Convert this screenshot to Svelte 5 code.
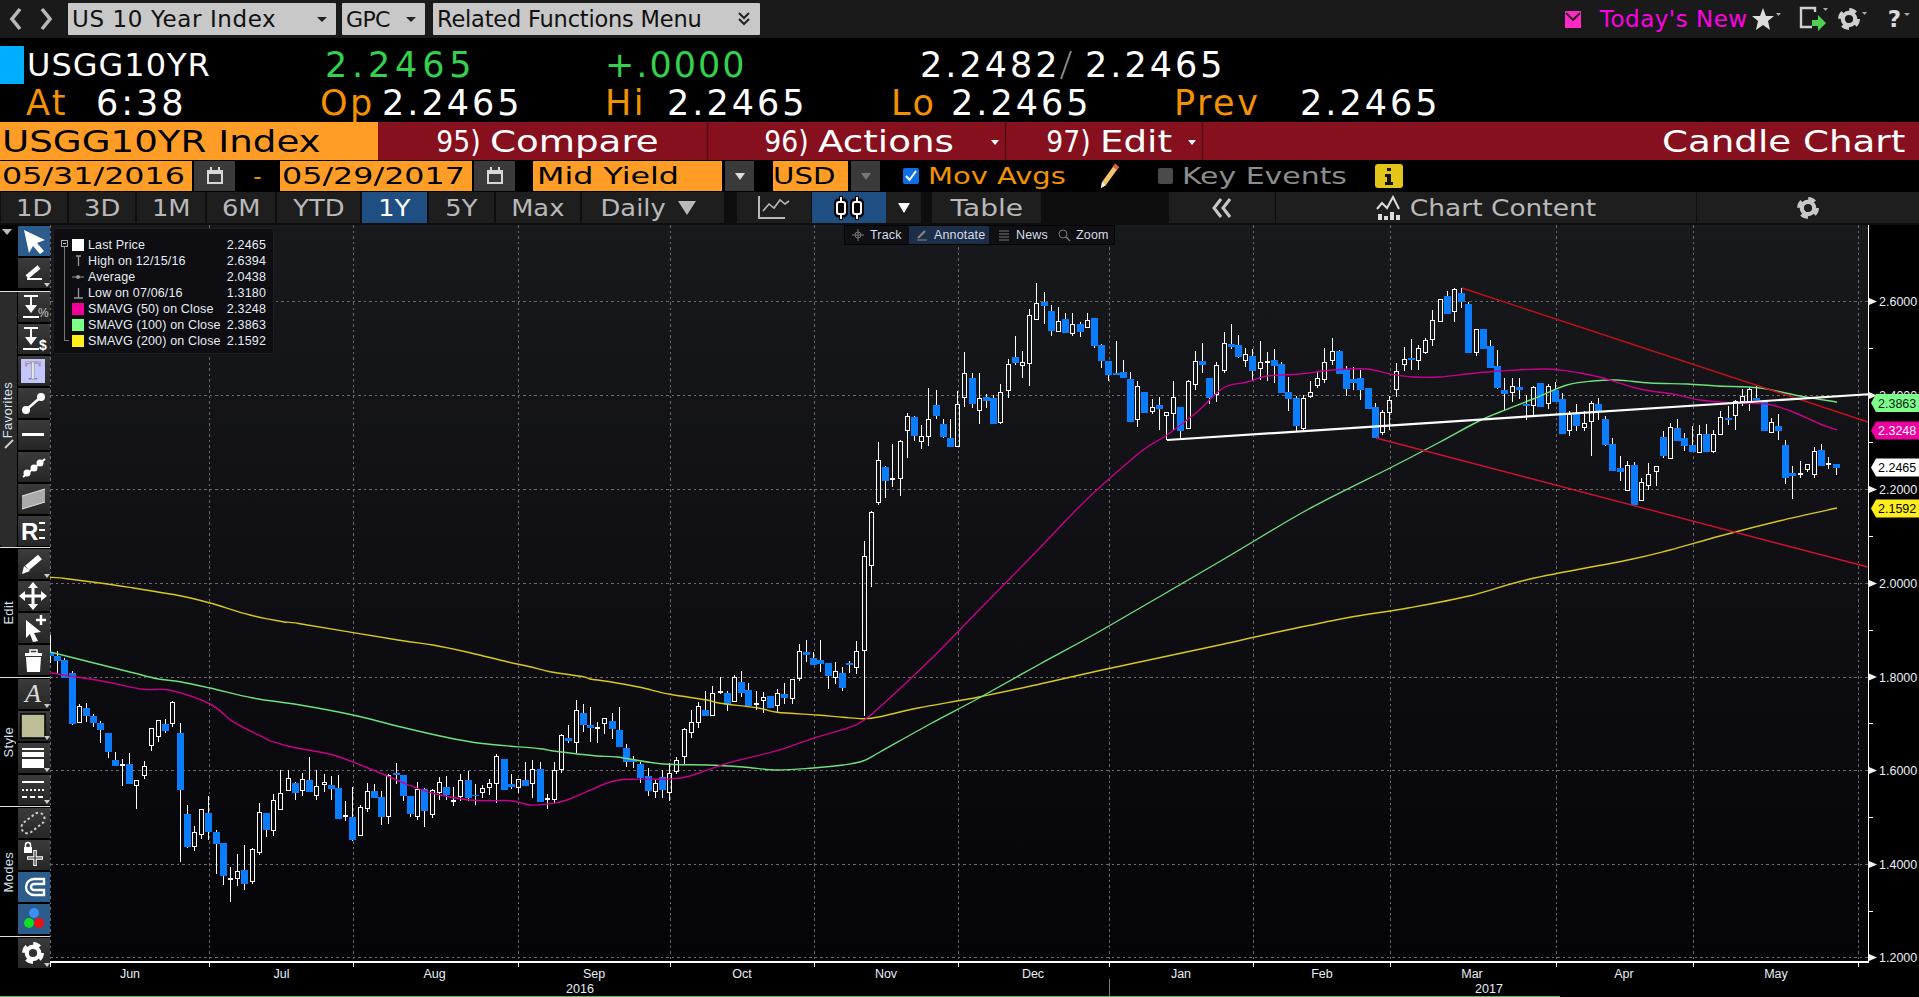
<script>
  const seg = (off, rows) => rows.map(([k, a, b, h, l]) => [k, off + a / 3, off + b / 3, off + h / 3, off + l / 3]);
  const W = 0, B = 1, D = 2;
  const data = [
    ...seg(640, [[B,38,47,-15,68],[B,48,63,33,103],[B,60,114,55,115],[B,99,251,92,254],[W,199,248,192,248],[B,204,228,188,245],[B,228,249,222,262],[B,249,270,242,308],[B,279,336,278,354],[B,360,378,336,378],[D,372,376,358,437],[B,372,432,339,432],[W,421,437,421,506],[W,379,407,363,417],[W,265,317,265,332],[W,240,290,240,305],[B,252,273,237,278],[W,186,251,183,261],[B,279,450,249,665],[B,522,621,495,625],[W,577,620,558,632],[W,508,584,508,597],[B,519,576,468,600],[B,576,612,570,702],[B,609,708,609,735],[D,715,719,681,785],[W,693,716,642,738],[B,690,732,615,750],[W,627,725,625,731],[W,517,638,489,645],[B,519,570,519,590],[W,481,572,461,587],[W,460,509,391,509],[W,415,452,390,452],[B,430,459,427,480],[W,418,452,400,468],[B,420,456,351,456],[W,439,467,390,480],[W,427,434,402,456],[B,435,447,408,480],[B,444,537,405,537],[D,525,529,483,543],[B,531,600,441,603],[W,502,587,495,587],[W,454,505,429,516],[B,453,474,432,474],[B,471,531,453,555],[W,405,530,402,552],[B,399,405,369,432],[B,405,468,405,483],[B,468,522,468,531],[W,448,530,426,540],[B,447,513,444,561],[W,451,522,447,534],[W,427,458,411,480],[B,441,465,408,480],[D,479,483,441,498],[W,421,468,402,483],[B,420,474,393,483],[B,465,468,432,495],[W,445,458,435,474],[W,430,443,417,465],[W,349,431,342,489],[B,357,450,357,450],[B,432,441,402,447],[W,418,441,417,458],[B,420,438,366,438],[W,388,431,360,474]]),
    ...seg(480, [[B,867,965,846,965],[D,953,957,942,987],[W,871,958,847,970],[W,766,868,763,880],[B,773,783,735,790],[W,691,788,660,818],[B,699,735,672,755],[B,735,744,681,785],[D,742,746,726,788],[W,715,731,715,762],[B,723,747,700,777],[B,750,801,681,801],[B,804,846,792,861],[B,840,846,828,864],[B,852,894,846,909],[B,888,933,864,948],[W,910,935,900,954],[B,891,930,870,954],[W,880,937,850,963],[W,841,874,831,882],[W,748,830,745,855],[W,727,758,690,774],[W,679,728,666,744],[B,690,708,633,708],[W,640,706,618,708],[D,634,638,591,642],[B,640,675,633,693],[W,592,665,586,665],[B,606,639,573,651],[B,630,678,609,678],[D,670,674,633,690],[W,652,661,636,699],[B,648,684,648,684],[W,640,676,627,696],[B,642,654,609,672],[W,598,656,598,672],[W,514,596,492,603],[B,516,525,480,546],[B,534,555,516,555],[B,540,552,480,576],[B,549,588,549,627],[W,574,592,546,612],[B,579,624,561,633],[B,549,555,543,579],[W,514,562,483,582],[W,229,512,183,708],[W,97,257,93,321]]),
    ...seg(270, [[W,571,698,516,705],[B,591,633,588,684],[D,625,629,522,651],[W,514,626,510,678],[W,439,482,430,564],[B,441,498,438,513],[W,499,515,465,537],[W,448,500,354,528],[B,405,438,360,447],[B,462,501,447,504],[B,504,531,447,531],[W,403,530,363,530],[W,310,383,246,411],[B,324,402,309,414],[W,385,422,309,462],[B,381,393,372,414],[B,384,462,375,462],[W,367,456,342,462],[W,283,362,267,384],[B,261,279,198,285],[W,277,287,243,324],[W,136,281,117,348],[W,100,149,39,149],[B,95,108,66,162],[B,123,183,105,198],[W,154,185,111,185],[B,147,189,129,189],[W,163,189,129,198],[B,162,186,156,201],[W,151,173,129,173],[B,144,228,144,234],[B,225,273,222,294],[B,273,315,273,333],[B,309,315,213,315],[B,306,324,270,324],[B,327,456,306,456],[W,349,449,333,471],[B,366,429,366,429],[W,412,425,387,432],[B,405,417,381,480],[W,427,437,427,510],[W,382,431,333,480],[B,411,483,411,507],[W,334,476,330,476],[W,274,344,243,360]]),
    ...seg(270, [[B,273,285,219,309],[B,324,384,324,402],[W,286,374,276,396],[W,220,302,186,309],[B,222,231,162,237],[B,225,261,195,264],[W,254,272,234,291],[B,258,303,237,333],[W,277,296,213,330],[D,273,277,246,333],[B,270,288,237,339],[B,282,369,276,369],[B,366,387,321,423],[B,384,468,378,483],[W,385,476,375,480],[W,367,379,333,384],[W,325,347,306,354],[W,277,329,234,339],[W,244,272,204,285],[B,243,312,240,312],[B,300,357,288,378],[B,327,339,291,360],[B,324,360,300,390],[B,354,417,354,417],[B,411,504,399,504],[W,427,487,420,495],[W,391,428,378,480],[W,304,359,279,381],[W,268,283,231,303],[B,264,270,207,300],[W,235,272,225,300],[W,211,248,204,252],[W,151,208,120,228],[W,88,155,88,155],[B,78,132,63,132],[W,58,124,55,156],[B,69,96,54,114],[B,102,249,96,249],[W,178,248,178,258],[B,177,237,177,237],[B,228,294,210,294],[B,288,354,240,357]]),
    ...seg(270, [[B,360,372,324,420],[W,349,367,324,396],[B,351,360,324,387],[B,402,408,375,450],[W,352,407,348,438],[B,339,411,339,411],[W,349,400,342,417],[B,360,396,336,396],[B,387,492,369,492],[W,433,482,423,498],[B,432,468,402,483],[W,460,472,423,483],[W,400,455,393,558],[B,402,423,384,450],[B,447,525,438,528],[B,522,603,504,603],[B,594,606,558,633],[W,586,661,573,661],[B,585,705,576,708],[W,637,690,624,693],[W,613,647,579,660],[W,589,605,588,648],[B,501,558,483,564],[W,472,566,459,566],[B,474,513,447,513],[B,504,528,489,543],[B,525,546,468,546],[W,493,548,465,548],[B,492,546,462,546],[W,493,545,480,549],[W,442,493,423,493],[B,444,450,408,465],[W,394,437,390,480],[W,379,394,357,408],[W,358,394,354,423],[B,384,390,348,390],[B,393,483,393,483],[W,457,487,444,487],[B,468,483,432,510],[B,525,624,510,642],[B,609,618,588,687],[D,608,612,573,624],[W,583,597,582,606],[W,544,613,531,624],[B,540,588,522,588],[D,579,583,561,597],[B,582,594,582,615]])
  ];
  const candles = data.map((c, i) => ({ k: c[0], x: Math.floor(50.4 + 7.2 * i) + 0.5, t: c[1], b: c[2], h: c[3], l: c[4] }));

  // Catmull-Rom through the measured points, so the averages read as curves
  const smooth = (a) => {
    let d = `M${a[0][0]} ${a[0][1]}`;
    for (let i = 0; i < a.length - 1; i++) {
      const p0 = a[Math.max(i - 1, 0)], p1 = a[i], p2 = a[i + 1], p3 = a[Math.min(i + 2, a.length - 1)];
      const c1 = [p1[0] + (p2[0] - p0[0]) / 6, p1[1] + (p2[1] - p0[1]) / 6];
      const c2 = [p2[0] - (p3[0] - p1[0]) / 6, p2[1] - (p3[1] - p1[1]) / 6];
      d += `C${c1[0].toFixed(1)} ${c1[1].toFixed(1)} ${c2[0].toFixed(1)} ${c2[1].toFixed(1)} ${p2[0]} ${p2[1]}`;
    }
    return d;
  };
  const sma200 = smooth([[50,577.3],[67,578.7],[100,583],[133,588],[180,595.7],[210,603],[250,615],[283,621.7],[300,623.7],[398,640],[433,645],[470,652.7],[507,661.7],[530,666.7],[550,671.7],[583,676.7],[590,679],[610,681.7],[640,687.3],[670,694.3],[707,700],[720,703.3],[757,707.7],[777,712.3],[817,715],[843,717.3],[863,718.7],[880,716.7],[918,708],[979,697],[1040,684],[1102,670],[1163,657],[1224,644],[1273,633],[1346,618],[1408,608],[1469,596],[1530,579],[1628,560],[1670,550],[1720,536],[1780,520.7],[1837,508]]);
  const sma100 = smooth([[50,652],[93,662.7],[133,672.7],[157,678.7],[180,681.7],[210,688],[253,698],[300,705],[353,715],[397,726],[440,736],[480,743.3],[540,748.7],[553,751],[597,756],[617,757],[663,764],[707,765],[743,767],[777,770],[813,768],[843,765],[863,761],[880,752],[930,724],[979,698],[1040,664],[1102,630],[1224,559],[1307,510],[1390,468],[1440,442],[1477,422],[1500,412],[1533,399],[1567,385],[1593,381],[1617,380],[1650,383],[1687,384],[1717,386],[1760,388],[1800,396],[1837,402]]);
  const sma50 = smooth([[50,672.7],[70,676],[107,682],[143,689.3],[170,690.3],[210,704],[233,721.7],[260,735.7],[273,741.7],[293,747.3],[333,755],[373,770],[407,784.3],[433,793.3],[473,800.3],[510,800.7],[530,805],[547,804],[567,800],[610,782],[630,779.3],[670,779],[690,776],[727,763.3],[777,750.7],[813,738.3],[857,724.3],[880,706.7],[930,660],[979,610],[1030,558],[1077,509],[1100,487],[1143,450],[1167,435],[1197,412],[1223,388],[1247,382],[1267,376],[1300,374],[1333,370],[1367,369],[1390,374],[1413,377],[1440,377],[1467,374],[1500,371],[1547,369],[1580,373],[1603,378],[1640,389],[1673,394],[1700,400],[1733,403],[1767,404],[1793,412],[1820,424],[1837,430]]);

  const vgrid = [209.5, 353.5, 518.5, 670.5, 814.5, 958.5, 1109.5, 1253.5, 1390.5, 1556.5, 1693.5, 1858.5];
  const hgrid = [['2.6000',301.5],['2.4000',395.5],['2.2000',489.5],['2.0000',583.5],['1.8000',677],['1.6000',770.5],['1.4000',864.5],['1.2000',957.5]];
  const minor = [348, 442, 536, 630, 723.5, 817.5, 911];
  const months = [['Jun',130],['Jul',281.5],['Aug',434.5],['Sep',594],['Oct',742],['Nov',886],['Dec',1033],['Jan',1181],['Feb',1322],['Mar',1472],['Apr',1624],['May',1776]];
  const tags = [
    { v: '2.3863', y: 403, bg: '#7dff8c', fg: '#0c1a10' },
    { v: '2.3248', y: 430.5, bg: '#ec00a0', fg: '#ffffff' },
    { v: '2.2465', y: 467.5, bg: '#ffffff', fg: '#000000' },
    { v: '2.1592', y: 508.5, bg: '#ffee1e', fg: '#000000' }
  ];

  const tabsA = [['1D',66],['3D',66],['1M',68],['6M',68],['YTD',83],['1Y',65,true],['5Y',65],['Max',84]];

  const ic = (inner) => `<svg width="32" height="30" viewBox="0 0 32 30">${inner}</svg>`;
  const gearSvg = (cx, cy, r, c = '#fff') => `<circle cx="${cx}" cy="${cy}" r="${r * 0.62}" fill="none" stroke="${c}" stroke-width="${r * 0.42}"/><circle cx="${cx}" cy="${cy}" r="${r * 0.92}" fill="none" stroke="${c}" stroke-width="${r * 0.34}" stroke-dasharray="${r * 0.72} ${r * 0.725}"/>`;
  const tool = (svg, opts = {}) => ({ svg: ic(svg), ...opts });
  const arrowDown = '<path d="M6 4h14M13 4v11" stroke="#fff" stroke-width="2" fill="none"/><path d="M7 13h12l-6 8z" fill="#fff"/><rect x="5" y="24" width="16" height="2" fill="#fff"/>';
  const secTop = [
    tool('<polygon points="6,4 27,14 19,17 26,25 22,28 15,20 11,27" fill="#fff"/>', { blue: true }),
    tool('<path d="M9 19 L21 9" stroke="#fff" stroke-width="4.5"/><rect x="9" y="20" width="15" height="2" fill="#fff"/>', { caret: true })
  ];
  const secFav = [
    tool(arrowDown + '<text x="20" y="25" class="ti" fill="#ccc">%</text>'),
    tool(arrowDown + '<text x="21" y="26" class="ti b" fill="#fff">$</text>'),
    tool('<rect x="3" y="3" width="24" height="24" fill="#c4c6fb"/><text x="15" y="23" class="tt">T</text>'),
    tool('<path d="M8 22 L24 8" stroke="#fff" stroke-width="2.5"/><circle cx="8" cy="22" r="4" fill="#fff"/><circle cx="23" cy="9" r="4" fill="#fff"/>'),
    tool('<rect x="4" y="13" width="22" height="3" fill="#fff"/>'),
    tool('<path d="M5 25 L27 7" stroke="#fff" stroke-width="2"/><circle cx="9" cy="21" r="3.5" fill="#fff"/><circle cx="16" cy="16" r="3.5" fill="#fff"/><circle cx="22" cy="11" r="3.5" fill="#fff"/>'),
    tool('<polygon points="4,12 27,5 27,18 4,25" fill="#aaa"/><path d="M4 12 L27 5 M4 25 L27 18" stroke="#ddd" stroke-width="1.2"/>'),
    tool('<text x="3" y="24" class="tr">R</text><path d="M21 7h6M21 14h6M21 22h6" stroke="#fff" stroke-width="2"/>')
  ];
  const secEdit = [
    tool('<path d="M9 19 L22 8" stroke="#fff" stroke-width="6"/><polygon points="4,25 6,17 12,22" fill="#fff"/>', { caret: true }),
    tool('<path d="M15 4v21M4 15h22" stroke="#fff" stroke-width="3"/><path d="M15 1l5 6h-10zM15 29l5-6h-10zM1 15l6-5v10zM29 15l-6-5v10z" fill="#fff"/>'),
    tool('<polygon points="8,7 23,19 16,20 20,28 15,29 12,21 8,25" fill="#fff"/><path d="M23 2v10M18 7h10" stroke="#fff" stroke-width="2.5"/>'),
    tool('<rect x="7" y="8" width="17" height="3" fill="#fff"/><rect x="12" y="5" width="7" height="3" fill="none" stroke="#fff" stroke-width="1.5"/><path d="M8 12h15l-1 15h-13z" fill="#fff"/>')
  ];
  const secStyle = [
    tool('<text x="15" y="23" class="ta">A</text>', { caret: true }),
    tool('<rect x="3" y="3" width="24" height="24" fill="#bdbd96" stroke="#000" stroke-width="1.5"/>', { caret: true }),
    tool('<rect x="4" y="5" width="22" height="2" fill="#fff"/><rect x="4" y="9" width="22" height="5" fill="#fff"/><rect x="4" y="16" width="22" height="9" fill="#fff"/>', { caret: true }),
    tool('<path d="M4 7h22" stroke="#fff" stroke-width="2"/><path d="M4 15h22" stroke="#fff" stroke-width="2" stroke-dasharray="2 2"/><path d="M4 22h22" stroke="#fff" stroke-width="2" stroke-dasharray="5 3"/>', { caret: true })
  ];
  const secModes = [
    tool('<g transform="rotate(-38 15 15)"><rect x="2" y="9" width="26" height="12" rx="6" fill="none" stroke="#ccc" stroke-width="2" stroke-dasharray="2.5 2.5"/></g>'),
    tool('<rect x="6" y="7" width="8" height="6" fill="#fff"/><path d="M7.5 7V5a2.5 2.5 0 0 1 5 0v2" stroke="#fff" stroke-width="1.5" fill="none"/><path d="M17 10v16M9 18h16" stroke="#fff" stroke-width="3.5"/><path d="M17 11v14M10 18h14" stroke="#333" stroke-width="1.2"/>'),
    tool('<path d="M26 7 H16 a8 8 0 0 0 0 16 H26 V18 H16 a3 3 0 0 1 0 -6 H26 z" fill="none" stroke="#fff" stroke-width="2.4"/>', { blue: true }),
    tool('<circle cx="16" cy="9" r="5" fill="#3a8ff0"/><circle cx="11" cy="19" r="5" fill="#10e020"/><circle cx="21" cy="19" r="5" fill="#f01010"/>', { blue: true })
  ];
  const secGear = [tool(gearSvg(15, 15, 10), { caret: true })];

  const legend = [
    { m: 'box', s: '#fff', t: 'Last Price', v: '2.2465' },
    { m: 'hi', t: 'High on 12/15/16', v: '2.6394' },
    { m: 'av', t: 'Average', v: '2.0438' },
    { m: 'lo', t: 'Low on 07/06/16', v: '1.3180' },
    { m: 's', s: '#ee0099', t: 'SMAVG (50) on Close', v: '2.3248' },
    { m: 's', s: '#7dff8c', t: 'SMAVG (100) on Close', v: '2.3863' },
    { m: 's', s: '#ffee1e', t: 'SMAVG (200) on Close', v: '2.1592' }
  ];
</script>

{#snippet Tools(list)}
  <div class="tools">
    {#each list as t}
      <div class="tool" class:blue={t.blue}>
        {@html t.svg}
        {#if t.caret}<span class="tc"></span>{/if}
      </div>
    {/each}
  </div>
{/snippet}

{#snippet cal()}
  <svg width="18" height="20" viewBox="0 0 18 20"><rect x="1" y="4" width="16" height="14" fill="#d8d8d8"/><rect x="3" y="8" width="12" height="8" fill="#3a3a3a"/><rect x="4" y="1" width="2" height="5" fill="#d8d8d8"/><rect x="12" y="1" width="2" height="5" fill="#d8d8d8"/></svg>
{/snippet}

<div class="page">
  <header class="top">
    <svg class="nav" width="50" height="24" viewBox="0 0 50 24"><path d="M11 2 L3 12 L11 22M33 2 L41 12 L33 22" fill="none" stroke="#b9b9b9" stroke-width="3.6"/></svg>
    <div class="box b1"><span class="tx">US 10 Year Index</span><i class="car"></i></div>
    <div class="box b2"><span class="tx t2">GPC</span><i class="car"></i></div>
    <div class="box b3"><span class="tx t3">Related Functions Menu</span>
      <svg width="14" height="16" viewBox="0 0 14 16"><path d="M2 2l5 5 5-5M2 8l5 5 5-5" fill="none" stroke="#222" stroke-width="2"/></svg></div>
    <div class="topright">
      <svg class="mail" width="16" height="17" viewBox="0 0 16 17"><rect width="16" height="17" fill="#ff2ac4"/><path d="M1 2l7 7 7-7" fill="none" stroke="#2a0a20" stroke-width="1.8"/></svg>
      <span class="news">Today's New</span>
      <svg class="i1" width="30" height="24" viewBox="0 0 30 24"><polygon points="12,1 15,9 23,9 17,14 19,23 12,18 5,23 7,14 1,9 9,9" fill="#ddd"/><path d="M25 6h5l-2.500 3z" fill="#aaa"/></svg>
      <svg class="i2" width="34" height="28" viewBox="0 0 34 28"><path d="M14 22H3V3h14v4" fill="none" stroke="#cfcfcf" stroke-width="2.4"/><path d="M14 15h6v-5l8 8-8 8v-5h-6z" fill="#4fd04f"/><path d="M25 3h5l-2.500 3z" fill="#aaa"/></svg>
      <svg class="i3" width="34" height="26" viewBox="0 0 34 26">{@html gearSvg(11, 13, 10, '#cfcfcf')}<path d="M24 6h5l-2.500 3z" fill="#aaa"/></svg>
      <span class="q">?</span><i class="qc"></i>
    </div>
  </header>

  <div class="quote r1">
    <i class="flag"></i>
    <span class="q1 tick">USGG10YR</span>
    <span class="q2 last">2.2465</span>
    <span class="q3 chg">+.0000</span>
    <span class="q4 num">2.2482</span>
    <svg class="slash" width="20" height="30" viewBox="0 0 20 30"><path d="M14 1L4 29" stroke="#888" stroke-width="2"/></svg>
    <span class="num">2.2465</span>
  </div>
  <div class="quote r2">
    <span class="c1 or">At</span><span class="c2 num">6:38</span>
    <span class="c3 or">Op</span><span class="c4 num">2.2465</span>
    <span class="c5 or">Hi</span><span class="c6 num">2.2465</span>
    <span class="c7 or">Lo</span><span class="c8 num">2.2465</span>
    <span class="c9 or">Prev</span><span class="num">2.2465</span>
  </div>

  <div class="bar">
    <div class="sec-name"><span class="sx">USGG10YR Index</span></div>
    <div class="act a1"><span class="fn">95)</span><span class="sy">Compare</span></div>
    <div class="act a2"><span class="fn">96)</span><span class="sy">Actions</span><i class="wc"></i></div>
    <div class="act a3"><span class="fn">97)</span><span class="sy">Edit</span><i class="wc"></i></div>
    <div class="title"><span class="sy">Candle Chart</span></div>
  </div>

  <div class="dates">
    <div class="ob d1"><span class="st">05/31/2016</span></div>
    <div class="gb calb">{@render cal()}</div>
    <div class="dash">-</div>
    <div class="ob d1"><span class="st">05/29/2017</span></div>
    <div class="gb calb">{@render cal()}</div>
    <div class="ob d2"><span class="st">Mid Yield</span></div>
    <div class="gb arr"><i></i></div>
    <div class="ob d3"><span class="st usd">USD</span></div>
    <div class="gb arr dim"><i></i></div>
    <svg class="chk" width="16" height="16" viewBox="0 0 16 16"><rect width="16" height="16" rx="2" fill="#0a6fe8"/><path d="M3 8l3.500 4L13 3" stroke="#fff" stroke-width="2" fill="none"/></svg>
    <span class="mov"><span class="st or2">Mov Avgs</span></span>
    <svg class="pen" width="22" height="26" viewBox="0 0 22 26"><path d="M17 1l4 3-13 18-5 3 1-6z" fill="#f2c46a"/><path d="M17 1l4 3-2 3-4-3z" fill="#e85a3a"/><path d="M4 19l4 3-5 3z" fill="#eee"/></svg>
    <i class="ksq"></i>
    <span class="key"><span class="st gr">Key Events</span></span>
    <svg class="info" width="28" height="24" viewBox="0 0 28 24"><rect width="28" height="24" rx="3" fill="#e3c51a"/><rect x="12" y="4" width="4" height="3" fill="#111"/><path d="M10 10h6v8h2v3h-8v-3h2v-5h-2z" fill="#111"/></svg>
  </div>

  <nav class="tabs">
    {#each tabsA as [t, w, on]}
      <div class="tab" class:on style="width:{w}px"><span class="st2">{t}</span></div>
    {/each}
    <div class="tab daily"><span class="st2">Daily</span><i class="tri"></i></div>
    <div class="tab t-line">
      <svg width="34" height="26" viewBox="0 0 34 26"><path d="M2 1v22h26" fill="none" stroke="#b8b8b8" stroke-width="2"/><path d="M6 16l6-7 5 4 6-8 5 4 4-3" fill="none" stroke="#b8b8b8" stroke-width="1.6"/></svg>
    </div>
    <div class="tab on t-can">
      <svg width="44" height="26" viewBox="0 0 44 26"><path d="M14 1v24M30 1v24" stroke="#000" stroke-width="4"/><rect x="9.500" y="6" width="9" height="14" rx="2" fill="none" stroke="#000" stroke-width="5"/><rect x="25.500" y="6" width="9" height="14" rx="2" fill="none" stroke="#000" stroke-width="5"/><path d="M14 2v4M14 20v4M30 2v4M30 20v4" stroke="#fff" stroke-width="2"/><rect x="10" y="7" width="8" height="12" rx="2" fill="none" stroke="#fff" stroke-width="2"/><rect x="26" y="7" width="8" height="12" rx="2" fill="none" stroke="#fff" stroke-width="2"/></svg>
    </div>
    <div class="tab t-car"><i class="tri w"></i></div>
    <div class="tab t-table"><span class="st2">Table</span></div>
    <div class="tab t-back">
      <svg width="26" height="22" viewBox="0 0 26 22"><path d="M12 2L5 11l7 9M21 2l-7 9 7 9" fill="none" stroke="#c8c8c8" stroke-width="3"/></svg>
    </div>
    <div class="tab t-cc">
      <svg width="28" height="26" viewBox="0 0 28 26"><path d="M2 14l5-6 5 5 6-11 6 12" fill="none" stroke="#ddd" stroke-width="2"/><rect x="3" y="19" width="4" height="6" fill="#ddd"/><rect x="9" y="21" width="4" height="4" fill="#ddd"/><rect x="15" y="17" width="4" height="8" fill="#ddd"/><rect x="21" y="20" width="4" height="5" fill="#ddd"/></svg>
      <span class="st2">Chart Content</span>
    </div>
    <div class="tab t-gear"><svg width="24" height="24" viewBox="0 0 24 24">{@html gearSvg(12, 12, 10, '#c8c8c8')}</svg></div>
  </nav>

  <main class="main">
    <aside class="side">
      <section class="sect s0"><div class="lab"><i class="ldown"></i></div>{@render Tools(secTop)}</section>
      <section class="sect s1"><div class="lab fav"><span class="vt">Favorites</span><svg class="fpen" width="10" height="10" viewBox="0 0 10 10"><path d="M1 9L9 1" stroke="#ccc" stroke-width="2"/></svg></div>{@render Tools(secFav)}</section>
      <section class="sect s2"><div class="lab"><span class="vt">Edit</span></div>{@render Tools(secEdit)}</section>
      <section class="sect s2"><div class="lab"><span class="vt">Style</span></div>{@render Tools(secStyle)}</section>
      <section class="sect s2"><div class="lab"><span class="vt">Modes</span></div>{@render Tools(secModes)}</section>
      <section class="sect s3"><div class="lab"></div>{@render Tools(secGear)}</section>
    </aside>

    <div class="chart">
      <svg class="plot" width="1869" height="771" viewBox="50 225 1869 771">
        <defs>
          <linearGradient id="bg" x1="0" y1="0" x2="0" y2="1"><stop offset="0" stop-color="#18191d"/><stop offset="0.5" stop-color="#0e0e13"/><stop offset="1" stop-color="#040408"/></linearGradient>
        </defs>
        <rect x="50" y="225" width="1818" height="737" fill="url(#bg)"/>
        <g stroke="#6a6a6a" stroke-width="1" stroke-dasharray="2.500 3" shape-rendering="crispEdges">
          <line x1="50.500" y1="225" x2="50.500" y2="962"/>
          {#each vgrid as x}<line x1={x} y1="225" x2={x} y2="962"/>{/each}
          {#each hgrid as [, y]}<line x1="50" y1={y} x2="1868" y2={y}/>{/each}
        </g>
        <g shape-rendering="crispEdges">
          {#each candles as c}
            {#if c.k === 1}
              <line x1={c.x} x2={c.x} y1={c.h} y2={c.l} stroke="#fff"/>
              <rect x={c.x - 3.5} y={c.t} width="7" height={c.b - c.t} fill="#0a7dff"/>
            {:else if c.k === 0}
              <line x1={c.x} x2={c.x} y1={c.h} y2={c.t} stroke="#fff"/>
              <line x1={c.x} x2={c.x} y1={c.b} y2={c.l} stroke="#fff"/>
              <rect x={c.x - 2} y={c.t} width="4" height={c.b - c.t} fill="none" stroke="#fff" stroke-width="1"/>
            {:else}
              <line x1={c.x} x2={c.x} y1={c.h} y2={c.l} stroke="#fff"/>
              <rect x={c.x - 2.5} y={c.t} width="5" height="2" fill="#fff"/>
            {/if}
          {/each}
        </g>
        <g fill="none" stroke-width="1.400" stroke-linejoin="round">
          <path d={sma200} stroke="#d8c81e"/>
          <path d={sma100} stroke="#6fe07e"/>
          <path d={sma50} stroke="#c8008c"/>
        </g>
        <line x1="1462" y1="288" x2="1868" y2="422" stroke="#c80f18" stroke-width="1.400"/>
        <line x1="1376" y1="438" x2="1868" y2="567" stroke="#d31030" stroke-width="1.400"/>
        <line x1="1167" y1="440" x2="1872" y2="394" stroke="#ffffff" stroke-width="2.200"/>

        <g stroke="#fff" shape-rendering="crispEdges">
          <line x1="1868.500" y1="225" x2="1868.500" y2="962" stroke-width="1.500"/>
          <line x1="50" y1="962" x2="1869" y2="962" stroke-width="1.500"/>
          <line x1="50.500" y1="962" x2="50.500" y2="967"/>
          {#each vgrid as x}<line x1={x} y1="962" x2={x} y2="967"/>{/each}
          {#each minor as y}<line x1="1868" y1={y} x2="1873" y2={y}/>{/each}
        </g>
        {#each hgrid as [l, y]}
          <polygon points="1869,{y - 3.5} 1869,{y + 3.5} 1877,{y}" fill="#f0f0f0"/>
          <text x="1879" y={y + 4.5} class="ax">{l}</text>
        {/each}
        {#each tags as t}
          <polygon points="1871,{t.y} 1876,{t.y - 9} 1919,{t.y - 9} 1919,{t.y + 9} 1876,{t.y + 9}" fill={t.bg}/>
          <text x="1878" y={t.y + 4.5} class="ax" style="fill:{t.fg}">{t.v}</text>
        {/each}
        {#each months as [m, x]}
          <text x={x} y="978" class="mo">{m}</text>
        {/each}
        <text x="580" y="993" class="mo">2016</text>
        <text x="1489" y="993" class="mo">2017</text>
        <line x1="1109.500" y1="979" x2="1109.500" y2="996" stroke="#777"/>
      </svg>

      <div class="legend">
        <i class="tree"></i>
        {#each legend as l}
          <div class="lrow">
            <span class="lm">
              {#if l.m === 'box'}
                <svg class="lb" width="7" height="7" viewBox="0 0 7 7"><rect x=".5" y=".5" width="6" height="6" fill="#111" stroke="#aaa"/><path d="M2 3.500h3" stroke="#ccc"/></svg>
              {/if}
            </span>
            <span class="sw">
              {#if l.s}<i style="background:{l.s}"></i>
              {:else if l.m === 'hi'}<svg width="12" height="12" viewBox="0 0 12 12"><path d="M4 1h5M6.500 1v10" stroke="#999" stroke-width="1.300"/></svg>
              {:else if l.m === 'av'}<svg width="12" height="12" viewBox="0 0 12 12"><path d="M0 6h12" stroke="#999"/><circle cx="6" cy="6" r="2" fill="#999"/></svg>
              {:else}<svg width="12" height="12" viewBox="0 0 12 12"><path d="M2 11h9M6.500 1v10" stroke="#999" stroke-width="1.300"/></svg>{/if}
            </span>
            <span class="lt">{l.t}</span>
            <span class="lv">{l.v}</span>
          </div>
        {/each}
      </div>

      <div class="modes">
        <div class="md m1">
          <svg width="14" height="14" viewBox="0 0 14 14"><path d="M7 1v12M1 7h12" stroke="#777"/><circle cx="7" cy="7" r="3" fill="none" stroke="#777"/></svg><span>Track</span>
        </div>
        <div class="md m2 act2">
          <svg width="14" height="14" viewBox="0 0 14 14"><path d="M3 10L10 3" stroke="#888" stroke-width="2"/><path d="M2 12h10" stroke="#888"/></svg><span>Annotate</span>
        </div>
        <div class="md m3">
          <svg width="14" height="14" viewBox="0 0 14 14"><path d="M2 3h10M2 6h10M2 9h10M2 12h10" stroke="#777"/></svg><span>News</span>
        </div>
        <div class="md m4">
          <svg width="14" height="14" viewBox="0 0 14 14"><circle cx="6" cy="6" r="4" fill="none" stroke="#777"/><path d="M9 9l4 4" stroke="#777" stroke-width="1.500"/></svg><span>Zoom</span>
        </div>
      </div>
    </div>
  </main>
  <div class="greenline"></div>
</div>

<style>
  :global(body) { margin: 0; background: #000; overflow: hidden; }
  .page { width: 1919px; height: 997px; background: #000; color: #fff; font-family: "DejaVu Sans", "Liberation Sans", sans-serif; overflow: hidden; display: flex; flex-direction: column; }
  i { display: block; font-style: normal; }

  .top { height: 38px; background: #1a1a1a; display: flex; align-items: center; flex: none; }
  .nav { margin-left: 9px; margin-right: 9px; }
  .box { height: 32px; background: #c8c8c8; color: #111; display: flex; align-items: center; justify-content: space-between; box-sizing: border-box; padding: 0 9px 0 4px; margin-right: 6px; border-radius: 1px; }
  .tx { font-size: 23px; letter-spacing: 0.6px; white-space: nowrap; }
  .t2 { letter-spacing: -.6px; font-size: 22px; }
  .t3 { letter-spacing: -.2px; font-size: 22.500px; }
  .b1 { width: 268px; margin-left: 0; }
  .b2 { width: 83px; margin-right: 8px; }
  .b3 { width: 327px; }
  .car { width: 0; height: 0; border-left: 5px solid transparent; border-right: 5px solid transparent; border-top: 5px solid #222; }
  .topright { margin-left: auto; display: flex; align-items: center; padding-right: 9px; }
  .mail { margin-right: 19px; }
  .news { color: #ff00e6; font-size: 23px; letter-spacing: .5px; white-space: nowrap; }
  .i1 { margin-left: 3px; }
  .i2 { margin-left: 17px; }
  .i3 { margin-left: 6px; }
  .q { color: #dcdcdc; font-size: 23px; margin-left: 16px; font-weight: bold; }
  .qc { width: 0; height: 0; margin-left: 3px; margin-bottom: 10px; border-left: 3px solid transparent; border-right: 3px solid transparent; border-top: 3px solid #aaa; }

  .quote { display: flex; align-items: center; white-space: nowrap; flex: none; }
  .r1 { height: 38px; margin-top: 8px; }
  .r2 { height: 36px; margin-top: 1px; }
  .flag { width: 24px; height: 38px; background: #00aeff; }
  .q1 { width: 298px; margin-left: 3px; }
  .tick { font-size: 32px; letter-spacing: 1px; }
  .q2 { width: 280px; }
  .last { font-size: 35px; color: #35d04f; letter-spacing: 4.800px; }
  .q3 { width: 315px; }
  .chg { font-size: 35px; color: #35d04f; letter-spacing: 2px; }
  .num { font-size: 35px; letter-spacing: 3px; }
  .q4 { width: 137px; }
  .slash { margin-right: 8px; }
  .or { font-size: 35px; color: #f39200; letter-spacing: 2.500px; }
  .c1 { width: 70px; margin-left: 26px; }
  .c2 { width: 224px; }
  .c3 { width: 62px; }
  .c4 { width: 223px; }
  .c5 { width: 62px; }
  .c6 { width: 224px; }
  .c7 { width: 60px; }
  .c8 { width: 223px; }
  .c9 { width: 126px; }

  .bar { height: 38px; margin-top: 1px; display: flex; background: #87101f; flex: none; align-items: stretch; white-space: nowrap; }
  .sec-name { width: 378px; background: #ff9d26; color: #000; display: flex; align-items: center; padding-left: 2px; box-sizing: border-box; }
  .sx { font-size: 31px; display: inline-block; transform: scaleX(1.2); transform-origin: left center; }
  .act { display: flex; align-items: center; border-right: 1px solid #3c0810; box-sizing: border-box; font-size: 31px; position: relative; }
  .fn { display: inline-block; transform: scaleX(0.86); transform-origin: right center; margin-right: 9px; }
  .sy { display: inline-block; font-size: 31px; transform: scaleX(1.2); transform-origin: left center; }
  .a1 { width: 330px; padding-left: 51px; }
  .a2 { width: 298px; padding-left: 49px; }
  .a3 { width: 197px; padding-left: 33px; }
  .wc { position: absolute; right: 6px; top: 18px; width: 0; height: 0; border-left: 4px solid transparent; border-right: 4px solid transparent; border-top: 5px solid #fff; }
  .title { flex: 1; display: flex; justify-content: flex-end; align-items: center; padding-right: 54px; }

  .dates { height: 30px; margin-top: 1px; display: flex; align-items: center; flex: none; white-space: nowrap; }
  .ob { height: 30px; background: #ff9d26; color: #000; display: flex; align-items: center; box-sizing: border-box; padding-left: 2px; }
  .st { display: inline-block; font-size: 23px; transform: scaleX(1.38); transform-origin: left center; }
  .st.usd { transform: scaleX(1.27); }
  .d1 { width: 192px; }
  .gb { height: 30px; background: #3a3a3a; display: flex; align-items: center; justify-content: center; margin-left: 2px; }
  .calb { width: 41px; }
  .dash { width: 45px; color: #f39200; font-size: 23px; text-align: center; }
  .d2 { width: 189px; margin-left: 18px; padding-left: 4px; }
  .arr { width: 29px; margin-left: 3px; }
  .arr i { width: 0; height: 0; border-left: 5px solid transparent; border-right: 5px solid transparent; border-top: 7px solid #ddd; }
  .arr.dim i { border-top-color: #777; }
  .d3 { width: 75px; margin-left: 19px; padding-left: 0; }
  .chk { margin-left: 23px; }
  .mov { width: 170px; margin-left: 9px; }
  .st.or2 { color: #f39200; transform: scaleX(1.26); }
  .ksq { width: 15px; height: 16px; background: #4a4a4a; border-radius: 2px; margin-left: 38px; }
  .key { width: 193px; margin-left: 9px; }
  .st.gr { color: #8c8c8c; transform: scaleX(1.3); }

  .tabs { height: 33px; margin-top: 1px; display: flex; background: #0e0e0e; flex: none; padding-left: 1px; gap: 2px; white-space: nowrap; }
  .tab { height: 31px; background: #1e1e1e; color: #b9b9b9; display: flex; align-items: center; justify-content: center; box-sizing: border-box; padding-top: 1px; }
  .tab.on { background: #1f4f82; color: #fff; }
  .st2 { display: inline-block; font-size: 23px; transform: scaleX(1.12); }
  .daily { width: 142px; gap: 16px; padding-right: 6px; }
  .tri { width: 0; height: 0; border-left: 9px solid transparent; border-right: 9px solid transparent; border-top: 14px solid #b9b9b9; }
  .tri.w { border-left-width: 6px; border-right-width: 6px; border-top: 10px solid #fff; }
  .t-line { width: 74px; margin-left: 11px; margin-right: -1px; }
  .t-can { width: 74px; margin-right: -2px; }
  .t-car { width: 35px; margin-right: 9px; }
  .t-table { width: 109px; }
  .t-table .st2 { transform: scaleX(1.22); }
  .t-back { width: 106px; margin-left: 126px; margin-right: -1px; }
  .t-cc { width: 420px; gap: 19px; margin-right: -1px; padding-left: 99px; justify-content: flex-start; }
  .t-cc .st2 { transform: scaleX(1.15); }
  .t-gear { flex: 1; }

  .main { flex: 1; display: flex; min-height: 0; }
  .side { width: 50px; flex: none; background: #000; display: flex; flex-direction: column; }
  .sect { display: flex; box-sizing: border-box; }
  .s0 { height: 66px; }
  .s1 { height: 257px; border-top: 1px solid #ddd; }
  .s2 { height: 130px; border-top: 1px solid #ddd; }
  .s3 { height: 60px; border-top: 1px solid #ddd; }
  .lab { width: 17px; flex: none; display: flex; align-items: center; justify-content: center; position: relative; }
  .fav { background: #2b2b2b; border-radius: 0 0 3px 3px; }
  .ldown { position: absolute; top: 4px; left: 2px; width: 0; height: 0; border-left: 5px solid transparent; border-right: 5px solid transparent; border-top: 6px solid #bbb; }
  .vt { writing-mode: vertical-rl; transform: rotate(180deg); font-family: "Liberation Sans", sans-serif; font-size: 13px; color: #d8e0ec; letter-spacing: .3px; }
  .s1 .vt { position: absolute; top: 90px; left: 0; }
  .fpen { position: absolute; top: 147px; left: 4px; }
  .tools { margin-left: 1px; padding-top: 1px; display: flex; flex-direction: column; gap: 2px; }
  .s1 .tools { padding-top: 0; }
  .s2 .tools, .s3 .tools { padding-top: 1px; }
  .tool { width: 32px; height: 30px; background: linear-gradient(#3b3b3b, #262626); position: relative; }
  .tool.blue { background: #2b5c8c; }
  .tool :global(svg) { display: block; }
  .tool :global(.ti) { font-family: "Liberation Sans", sans-serif; font-size: 12px; }
  .tool :global(.ti.b) { font-weight: bold; font-size: 14px; }
  .tool :global(.tt) { font-family: "Liberation Serif", serif; font-size: 25px; fill: #fff; text-anchor: middle; stroke: #556; stroke-width: .5px; }
  .tool :global(.tr) { font-family: "Liberation Sans", sans-serif; font-size: 24px; font-weight: bold; fill: #fff; }
  .tool :global(.ta) { font-family: "Liberation Serif", serif; font-style: italic; font-size: 26px; fill: #ddd; text-anchor: middle; }
  .tc { position: absolute; right: 0; bottom: 1px; width: 0; height: 0; border-left: 3.5px solid transparent; border-right: 3.5px solid transparent; border-top: 4px solid #ccc; }

  .chart { position: relative; flex: 1; min-width: 0; }
  .plot { display: block; }
  .ax { font-family: "Liberation Sans", sans-serif; font-size: 12.500px; fill: #e8eef6; }
  .mo { font-family: "Liberation Sans", sans-serif; font-size: 12.500px; fill: #e8eef6; text-anchor: middle; }

  .legend { position: absolute; left: 3px; top: 3px; width: 221px; height: 126px; box-sizing: border-box; padding: 8px 7px 0 8px; background: #0d0d12; border: 1px solid #1f1f24; border-radius: 3px; font-family: "Liberation Sans", sans-serif; font-size: 12.500px; letter-spacing: .15px; color: #e6ecf4; }
  .tree { position: absolute; left: 10px; top: 12px; width: 4px; height: 99px; border-left: 1px solid #777; border-bottom: 1px solid #777; }
  .lrow { height: 16px; display: flex; align-items: center; position: relative; }
  .lm { width: 10px; flex: none; }
  .lb { position: absolute; left: -1px; top: 3px; }
  .sw { width: 12px; height: 12px; flex: none; margin-right: 4px; display: block; }
  .sw i { width: 12px; height: 12px; }
  .sw svg { display: block; }
  .lt { flex: 1; white-space: nowrap; }
  .lv { flex: none; }

  .modes { position: absolute; left: 794px; top: 0; width: 271px; height: 20px; background: #101014; border: 1px solid #050505; box-sizing: border-box; display: flex; font-family: "Liberation Sans", sans-serif; font-size: 12.500px; letter-spacing: .15px; color: #d4dce6; }
  .md { display: flex; align-items: center; gap: 5px; box-sizing: border-box; padding-left: 6px; white-space: nowrap; }
  .md svg { flex: none; }
  .m1 { width: 64px; }
  .m2 { width: 80px; background: #1c2e48; }
  .m3 { width: 62px; padding-left: 8px; }
  .m4 { flex: 1; }

  .greenline { height: 1px; width: 1560px; background: #5cb85c; flex: none; }
</style>
